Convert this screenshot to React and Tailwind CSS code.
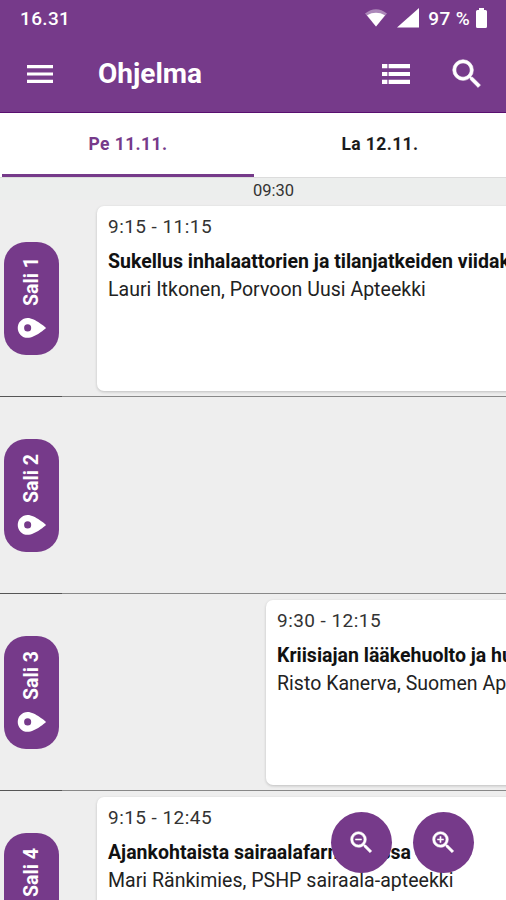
import React, { useState } from 'react';
import { MdSearch, MdPlace, MdZoomIn, MdZoomOut } from 'react-icons/md';

const days = ['Pe 11.11.', 'La 12.11.'];

const rooms = [
  {
    name: 'Sali 1',
    session: {
      time: '9:15 - 11:15',
      title: 'Sukellus inhalaattorien ja tilanjatkeiden viidak',
      speaker: 'Lauri Itkonen, Porvoon Uusi Apteekki',
      offset: 'ml-[97px]',
    },
  },
  { name: 'Sali 2' },
  {
    name: 'Sali 3',
    session: {
      time: '9:30 - 12:15',
      title: 'Kriisiajan lääkehuolto ja hu',
      speaker: 'Risto Kanerva, Suomen Ap',
      offset: 'ml-[266px]',
    },
  },
  {
    name: 'Sali 4',
    session: {
      time: '9:15 - 12:45',
      title: 'Ajankohtaista sairaalafarmasiassa',
      speaker: 'Mari Ränkimies, PSHP sairaala-apteekki',
      offset: 'ml-[97px]',
    },
  },
];

// thickens the visible strokes only, not the icon's empty bounding path
const boldIcon = '[&>path:not([fill=none])]:stroke-[0.4]';

function StatusBar() {
  return (
    <div className="flex h-9 items-center justify-between pl-5 pr-[19px] text-[19px] font-medium tracking-[0.35px]">
      <span className="pt-[2px]">16.31</span>
      <div className="flex items-center">
        <svg width="22" height="18" viewBox="0 0 22 18" fill="currentColor">
          <path d="M0 4.5Q11-4 22 4.5L11 17.5Z" opacity="0.4" />
          <path d="M2 6.200Q11 1.500 20 6.200L11 17.500Z" />
        </svg>
        <svg className="ml-[10px]" width="22" height="20" viewBox="0 0 22 20" fill="currentColor">
          <path d="M0 19.5L22 0V19.5Z" />
        </svg>
        <span className="ml-[9px] pt-[2px]">97 %</span>
        <svg className="ml-[6px]" width="11" height="20" viewBox="0 0 11 20" fill="currentColor">
          <path d="M3 0h5v2h1.500q1.500 0 1.500 1.500v15q0 1.500-1.500 1.500h-8Q0 20 0 18.500v-15Q0 2 1.500 2H3z" />
        </svg>
      </div>
    </div>
  );
}

function AppBar() {
  return (
    <div className="flex h-[76px] items-center pl-[27px] pr-[20px]">
      <button>
        <svg width="26" height="18" viewBox="0 0 26 18" fill="currentColor">
          <path d="M0 0h26v3.200H0zM0 7.400h26v3.200H0zM0 14.800h26v3.200H0z" />
        </svg>
      </button>
      <h1 className="ml-[45px] text-[28px] font-bold leading-none">Ohjelma</h1>
      <button className="ml-auto">
        <svg width="28" height="20" viewBox="0 0 28 20" fill="currentColor">
          <path d="M0 0h5v4.200H0zM7 0h21v4.200H7zM0 7.900h5v4.200H0zM7 7.900h21v4.200H7zM0 15.800h5v4.200H0zM7 15.800h21v4.200H7z" />
          <path d="M5 0h2v4.200H5zM5 7.900h2v4.200H5zM5 15.800h2v4.200H5z" opacity="0.4" />
        </svg>
      </button>
      <button className="ml-[38px]">
        <MdSearch size={38} className={boldIcon} />
      </button>
    </div>
  );
}

function DayTabs({ active, onChange }) {
  return (
    <div className="flex h-[65px] shrink-0 border-b border-[#dcdcdc] bg-white">
      {days.map((day, i) => (
        <button
          key={day}
          onClick={() => onChange(i)}
          className={`flex-1 border-b-[3px] pt-[2px] text-[17.5px] font-bold tracking-[0.4px] ${
            active === i ? 'ml-0.5 border-[#763a8a] text-[#763a8a]' : 'border-transparent text-[#1c1c1c]'
          }`}
        >
          {day}
        </button>
      ))}
    </div>
  );
}

function RoomRow({ room }) {
  const { session } = room;

  return (
    <div className="relative flex h-[197px] shrink-0 flex-col">
      <div className="flex flex-1 items-start pt-[6px]">
        {session && (
          <div className={`${session.offset} h-[185px] w-[700px] shrink-0 whitespace-nowrap rounded-[7px] bg-white pl-[11px] pt-[8px] shadow-[0_1px_3px_rgba(0,0,0,0.2)]`}>
            <p className="text-[19px] leading-[26px] tracking-[0.45px] text-[#333]">{session.time}</p>
            <h2 className="mt-[8px] text-[19.5px] font-bold leading-[28px] text-[#111]">{session.title}</h2>
            <p className="text-[19.5px] leading-[28px] tracking-[0.03px] text-[#222]">{session.speaker}</p>
          </div>
        )}
      </div>
      <div className="flex h-px">
        <div className="w-[62px] bg-[#555]" />
        <div className="flex-1 bg-[#888]" />
      </div>
      <div className="absolute left-[4px] top-[42px] flex h-[113px] w-[55px] items-center justify-center rounded-[22px] bg-[#763a8a] pt-[5px] text-white">
        <div className="flex shrink-0 -rotate-90 items-center gap-[5px] whitespace-nowrap text-[19.5px] font-bold">
          <MdPlace size={34} />
          <span>{room.name}</span>
        </div>
      </div>
    </div>
  );
}

export default function App() {
  const [activeDay, setActiveDay] = useState(0);

  return (
    <div className="relative flex h-[900px] w-[506px] flex-col overflow-hidden bg-[#eee] font-['Roboto',sans-serif]">
      <header className="h-[113px] shrink-0 border-b border-[#590f70] bg-[#763a8a] text-white">
        <StatusBar />
        <AppBar />
      </header>
      <DayTabs active={activeDay} onChange={setActiveDay} />
      <div className="h-[22px] shrink-0 bg-[#eceeed] pl-[253px] text-[16.5px] leading-[26px] text-[#333]">09:30</div>
      {rooms.map((room) => (
        <RoomRow key={room.name} room={room} />
      ))}
      <div className="absolute bottom-[27px] right-[32px] flex gap-[21px] text-white">
        <button className="flex h-[61px] w-[61px] items-center justify-center rounded-full bg-[#763a8a]">
          <MdZoomOut size={29} className={boldIcon} />
        </button>
        <button className="flex h-[61px] w-[61px] items-center justify-center rounded-full bg-[#763a8a]">
          <MdZoomIn size={29} className={boldIcon} />
        </button>
      </div>
    </div>
  );
}
